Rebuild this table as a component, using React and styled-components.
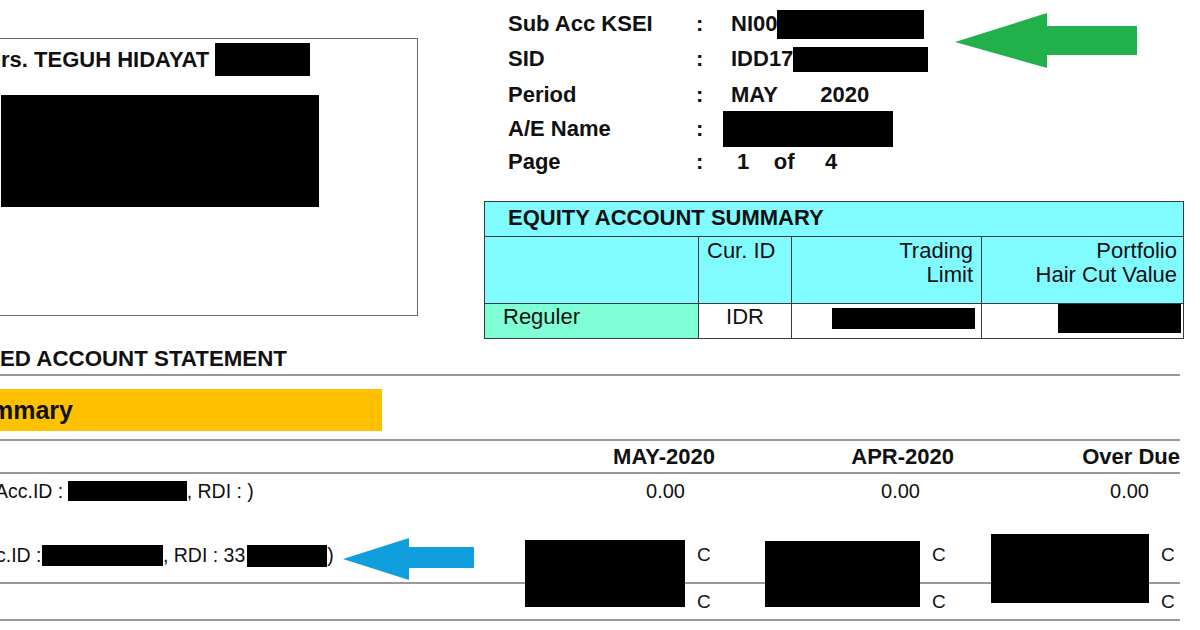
import React from 'react';
import styled, { createGlobalStyle } from 'styled-components';

const GlobalStyle = createGlobalStyle`
  html, body {
    margin: 0;
    padding: 0;
    background: #fff;
    overflow: hidden;
  }
  body {
    font-family: "Liberation Sans", Arial, sans-serif;
    color: #111;
  }
`;

const Page = styled.main`
  width: 1200px;
  height: 630px;
  overflow: hidden;
  background: #fff;
`;

const Top = styled.section`
  display: flex;
  align-items: flex-start;
`;

const AddressBox = styled.div`
  box-sizing: border-box;
  margin: 38px 67px 0 -20px;
  width: 438px;
  height: 278px;
  border: 1px solid #6a6a6a;
  padding: 4px 0 0 20px;
`;

const NameRow = styled.div`
  display: flex;
  align-items: center;
  gap: 6px;
  font-size: 22px;
  font-weight: bold;
  line-height: 33px;
`;

const Redact = styled.span`
  display: inline-block;
  flex: none;
  background: #000;
  width: ${p => p.w}px;
  height: ${p => p.h}px;
  margin-left: ${p => p.ml || 0}px;
  vertical-align: middle;
`;

const AddressBlock = styled.div`
  margin-top: 19px;
  width: 318px;
  height: 112px;
  background: #000;
`;

const RightCol = styled.div`
  width: 699px;
`;

const InfoArea = styled.div`
  display: flex;
  align-items: flex-start;
  padding: 7px 0 0 23px;
`;

const InfoGrid = styled.div`
  display: grid;
  grid-template-columns: 188px 35px 210px;
  grid-template-rows: 34px 36px 35px 33px 34px;
  align-items: center;
  font-size: 22px;
  font-weight: bold;
`;

const Value = styled.div`
  display: flex;
  align-items: center;
  white-space: pre;
`;

const Arrow = styled.svg`
  flex: none;
  display: block;
  margin: ${p => p.m};
`;

const EquityTable = styled.div`
  box-sizing: border-box;
  margin: 22px 0 0 -1px;
  width: 700px;
  border: 1px solid #3a3a3a;
  background: #80fbff;
`;

const EquityTitle = styled.div`
  height: 35px;
  display: flex;
  align-items: center;
  padding: 0 0 2px 23px;
  box-sizing: border-box;
  font-size: 22px;
  font-weight: bold;
  border-bottom: 1px solid #3a3a3a;
`;

const EquityGrid = styled.div`
  display: grid;
  grid-template-columns: 213px 93px 190px 1fr;
`;

const EqCell = styled.div`
  box-sizing: border-box;
  height: ${p => (p.head ? 67 : 34)}px;
  border-left: ${p => (p.first ? 'none' : '1px solid #3a3a3a')};
  border-bottom: ${p => (p.head ? '1px solid #3a3a3a' : 'none')};
  background: ${p => p.bg || 'transparent'};
  display: flex;
  flex-direction: column;
  align-items: ${p => p.align || 'flex-end'};
  justify-content: flex-start;
  padding: ${p => p.pad || '0'};
  font-size: 22px;
  line-height: 24px;
  text-align: right;
`;

const SectionTitle = styled.h2`
  margin: 8px 0 0;
  width: 1180px;
  padding-bottom: 3px;
  font-size: 22.3px;
  line-height: 24px;
  font-weight: bold;
  border-bottom: 2px solid #9a9a9a;
`;

const BandRow = styled.div`
  width: 1180px;
  padding: 13px 0 8px;
  border-bottom: 2px solid #9a9a9a;
`;

const Band = styled.div`
  width: 382px;
  height: 42px;
  background: #ffc000;
  display: flex;
  align-items: center;
  font-size: 25px;
  font-weight: bold;
  text-indent: -9px;
  overflow: hidden;
`;

const Row = styled.div`
  display: grid;
  grid-template-columns: 500px 215px 239px 226px;
  width: 1180px;
  height: ${p => p.h}px;
  box-sizing: border-box;
  align-items: ${p => p.align || 'center'};
  padding-top: ${p => p.pt || 0}px;
  border-bottom: ${p => (p.line ? '2px solid #9a9a9a' : 'none')};
  font-size: ${p => (p.head ? 22 : 19.5)}px;
  font-weight: ${p => (p.head ? 'bold' : 'normal')};
`;

const Desc = styled.div`
  display: flex;
  align-items: center;
  white-space: pre;
  margin: ${p => p.lift || 0}px 0 0 ${p => p.indent || 0}px;
`;

const HeadCell = styled.div`
  text-align: right;
`;

const Amount = styled.div`
  position: relative;
  display: flex;
  justify-content: flex-end;
  align-items: center;
  font-size: 20px;
`;

const Flag = styled.span`
  box-sizing: border-box;
  width: ${p => p.slot}px;
  padding-left: 12px;
  font-size: 19px;
`;

const Cover = styled.span`
  position: absolute;
  right: ${p => p.slot}px;
  top: ${p => p.top}px;
  width: ${p => p.w}px;
  height: ${p => p.h}px;
  background: #000;
`;

const slots = [30, 34, 31];
const covers = [
  { w: 160, h: 67, top: -4 },
  { w: 155, h: 66, top: -3 },
  { w: 158, h: 69, top: -10 },
];

const GreenArrow = () => (
  <Arrow width="182" height="55" viewBox="0 0 182 55" m="6px 0 0 14px">
    <path d="M0 29 L92 0 L92 13 L182 13 L182 42 L92 42 L92 55 Z" fill="#22b04b" />
  </Arrow>
);

const BlueArrow = () => (
  <Arrow width="131" height="42" viewBox="0 0 131 42" m="7px 0 0 9px">
    <path d="M0 21 L66 0 L66 9 L131 9 L131 30 L66 30 L66 42 Z" fill="#109edd" />
  </Arrow>
);

const App = () => {
  return (
    <Page>
      <GlobalStyle />
      <Top>
        <AddressBox>
          <NameRow>
            rs. TEGUH HIDAYAT
            <Redact w={95} h={33} />
          </NameRow>
          <AddressBlock />
        </AddressBox>

        <RightCol>
          <InfoArea>
            <InfoGrid>
              <span>Sub Acc KSEI</span><span>:</span>
              <Value>NI00<Redact w={147} h={29} /></Value>
              <span>SID</span><span>:</span>
              <Value>IDD17<Redact w={135} h={25} /></Value>
              <span>Period</span><span>:</span>
              <Value>{'MAY       2020'}</Value>
              <span>A/E Name</span><span>:</span>
              <Value><Redact w={170} h={36} ml={-8} /></Value>
              <span>Page</span><span>:</span>
              <Value>{' 1    of     4'}</Value>
            </InfoGrid>
            <GreenArrow />
          </InfoArea>

          <EquityTable>
            <EquityTitle>EQUITY ACCOUNT SUMMARY</EquityTitle>
            <EquityGrid>
              <EqCell head first />
              <EqCell head align="flex-start" pad="2px 0 0 8px">Cur. ID</EqCell>
              <EqCell head pad="2px 8px 0 0"><span>Trading</span><span>Limit</span></EqCell>
              <EqCell head pad="2px 6px 0 0"><span>Portfolio</span><span>Hair Cut Value</span></EqCell>

              <EqCell first bg="#80ffd6" align="flex-start" pad="1px 0 0 18px">Reguler</EqCell>
              <EqCell bg="#fff" align="center" pad="1px 0 0 0">IDR</EqCell>
              <EqCell bg="#fff" pad="4px 6px 0 0"><Redact w={143} h={21} /></EqCell>
              <EqCell bg="#fff" pad="0 2px 0 0"><Redact w={123} h={29} /></EqCell>
            </EquityGrid>
          </EquityTable>
        </RightCol>
      </Top>

      <SectionTitle>ED ACCOUNT STATEMENT</SectionTitle>

      <BandRow>
        <Band>mmary</Band>
      </BandRow>

      <Row h={33} head line>
        <div />
        <HeadCell>MAY-2020</HeadCell>
        <HeadCell>APR-2020</HeadCell>
        <HeadCell>Over Due</HeadCell>
      </Row>

      <Row h={34}>
        <Desc indent={-5}>Acc.ID : <Redact w={119} h={20} ml={-1} />, RDI : )</Desc>
        {slots.map((s, i) => (
          <Amount key={i}>0.00<Flag slot={s} /></Amount>
        ))}
      </Row>

      <Row h={76} line align="start" pt={36}>
        <Desc lift={-13} indent={-4}>
          c.ID : <Redact w={121} h={21} ml={-5} />, RDI : 33<Redact w={80} h={22} ml={2} />)
          <BlueArrow />
        </Desc>
        {slots.map((s, i) => (
          <Amount key={i}>
            <Cover slot={s} {...covers[i]} />
            <Flag slot={s}>C</Flag>
          </Amount>
        ))}
      </Row>

      <Row h={37} line>
        <div />
        {slots.map((s, i) => (
          <Amount key={i}><Flag slot={s}>C</Flag></Amount>
        ))}
      </Row>
    </Page>
  );
};

export default App;
